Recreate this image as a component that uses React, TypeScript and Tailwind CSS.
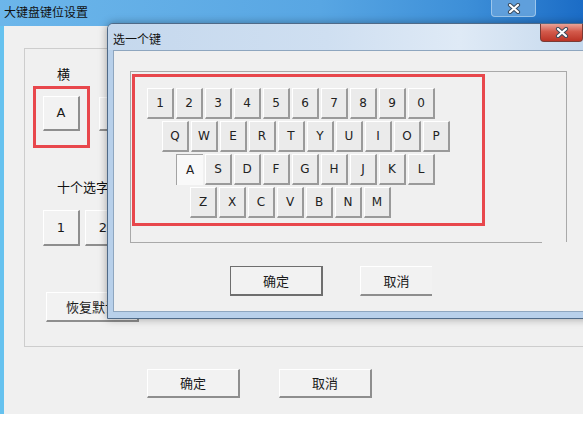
import type { ReactNode } from "react";

const cjk = "font-['Noto_Sans_CJK_SC','Noto_Sans',sans-serif]";
const latin = "font-['DejaVu_Sans','Liberation_Sans',sans-serif]";

const rows: { indent: string; keys: string[] }[] = [
  { indent: "ml-0", keys: ["1", "2", "3", "4", "5", "6", "7", "8", "9", "0"] },
  { indent: "ml-[15px]", keys: ["Q", "W", "E", "R", "T", "Y", "U", "I", "O", "P"] },
  { indent: "ml-[29px]", keys: ["A", "S", "D", "F", "G", "H", "J", "K", "L"] },
  { indent: "ml-[43px]", keys: ["Z", "X", "C", "V", "B", "N", "M"] },
];

function CloseGlyph() {
  return (
    <svg width="14" height="11" viewBox="0 0 14 11">
      <path d="M3 2 L11 9 M11 2 L3 9" stroke="#3a4a5c" strokeWidth="4.2" strokeLinecap="round" />
      <path d="M3 2 L11 9 M11 2 L3 9" stroke="#ffffff" strokeWidth="2.2" strokeLinecap="round" />
    </svg>
  );
}

function WinButton({ children, className = "" }: { children: ReactNode; className?: string }) {
  return (
    <div
      className={`flex items-center justify-center border-t border-l border-r-2 border-b-2 border-t-white border-l-white border-r-[#8e8e8e] border-b-[#8e8e8e] bg-[#f2f2f2] text-[13px] text-[#1a1a1a] ${className}`}
    >
      {children}
    </div>
  );
}

function Key({ label }: { label: string }) {
  const pressed = label === "A";
  return (
    <div
      className={
        pressed
          ? `flex h-[31px] w-[27px] items-center justify-center border-t border-l border-[#a3a3a3] bg-[#f9f9f9] text-[12px] text-[#222] ${latin}`
          : `flex h-[31px] w-[27px] items-center justify-center border-t border-l border-r-2 border-b-2 border-t-white border-l-white border-r-[#9a9a9a] border-b-[#9a9a9a] bg-[#ebebeb] text-[12px] text-[#222] ${latin}`
      }
    >
      {label}
    </div>
  );
}

export default function App() {
  return (
    <div className="relative h-[421px] w-[583px] overflow-hidden bg-white">
      {/* main window */}
      <div className="flex h-[414px] flex-col">
        <div className="flex h-[26px] items-start bg-[linear-gradient(90deg,#6cb6ea_0%,#58a6e3_55%,#3d8fd8_80%,#1b6cc6_100%)]">
          <span className={`mt-[4px] ml-[4px] text-[12px] leading-[16px] text-[#111] ${cjk}`}>大键盘键位设置</span>
          <div className="mr-[47px] ml-auto flex h-[17px] w-[45px] items-center justify-center rounded-b-[4px] border border-t-0 border-[#9cc6ec] bg-[#5f9fdc]">
            <CloseGlyph />
          </div>
        </div>
        <div className="flex flex-1 flex-col border-l-4 border-[#66c2ef] bg-[#f0f0f0] pt-[22px] pl-[20px]">
          <div className="flex h-[299px] w-[600px] flex-col border border-[#cdcdcd]">
            <span className={`mt-[17px] ml-[32px] text-[13px] leading-[16px] text-[#111] ${cjk}`}>横</span>
            <div className="mt-[4px] ml-[8px] flex items-start">
              <div className="h-[62px] w-[57px] border-[3px] border-[#e8474c] pt-[7px] pl-[7px]">
                <WinButton className={`h-[35px] w-[37px] ${latin} text-[12px]`}>A</WinButton>
              </div>
              <WinButton className={`mt-[11px] ml-[9px] h-[34px] w-[37px] ${latin} text-[12px]`}>B</WinButton>
            </div>
            <span className={`mt-[31px] ml-[32px] text-[13px] leading-[16px] text-[#111] ${cjk}`}>十个选字键</span>
            <div className="mt-[15px] ml-[18px] flex gap-[5px]">
              {["1", "2", "3", "4", "5"].map((n) => (
                <WinButton key={n} className={`h-[36px] w-[37px] ${latin} text-[12px]`}>
                  {n}
                </WinButton>
              ))}
            </div>
            <WinButton className={`mt-[46px] ml-[21px] h-[30px] w-[93px] ${cjk}`}>恢复默认</WinButton>
          </div>
          <div className="mt-[22px] ml-[123px] flex gap-[39px]">
            <WinButton className={`h-[29px] w-[93px] ${cjk}`}>确定</WinButton>
            <WinButton className={`h-[29px] w-[93px] ${cjk}`}>取消</WinButton>
          </div>
        </div>
      </div>

      {/* dialog window on top */}
      <div className="absolute top-[23px] left-[107px] flex h-[296px] w-[490px] flex-col rounded-tl-[6px] border border-[#4f6a88] bg-[#b8d0ea] shadow-[0_0_8px_rgba(0,0,0,0.35)]">
        <div className="flex h-[26px] items-start rounded-tl-[5px] bg-[linear-gradient(90deg,#c5d8ed_0%,#cfdff1_45%,#dfeaf6_72%,#c3d7ec_100%)]">
          <span className={`mt-[7px] ml-[5px] text-[12px] leading-[16px] text-[#111] ${cjk}`}>选一个键</span>
          <div className="mr-[13px] ml-auto flex h-[18px] w-[43px] items-center justify-center rounded-b-[4px] border border-t-0 border-[#7a3b36] bg-[linear-gradient(180deg,#e9a296_0%,#d35a4b_45%,#bb3426_100%)]">
            <CloseGlyph />
          </div>
        </div>
        <div className="mb-[6px] ml-[5px] flex flex-1 flex-col border border-[#8ea6bf] bg-[#f0f0f0]">
          <div className="mt-[20px] ml-[16px] h-[171px] w-[437px] border-t border-r border-l border-[#a9a9a9]">
            <div className="mt-[2px] ml-[1px] flex h-[152px] w-[353px] flex-col gap-[2px] border-[3px] border-[#e8474c] pt-[11px] pl-[12px]">
              {rows.map((row) => (
                <div key={row.keys[0]} className={`flex gap-[2px] ${row.indent}`}>
                  {row.keys.map((k) => (
                    <Key key={k} label={k} />
                  ))}
                </div>
              ))}
            </div>
          </div>
          <div className="ml-[16px] h-px w-[412px] bg-[#a9a9a9]" />
          <div className="mt-[23px] ml-[116px] flex gap-[37px]">
            <div
              className={`flex h-[30px] w-[93px] items-center justify-center border border-r-2 border-b-2 border-[#6e6e6e] bg-[#f2f2f2] text-[13px] text-[#1a1a1a] ${cjk}`}
            >
              确定
            </div>
            <div
              className={`flex h-[30px] w-[72px] items-center justify-center border-t border-l border-b-2 border-t-white border-l-white border-b-[#8e8e8e] bg-[#f2f2f2] text-[13px] text-[#1a1a1a] ${cjk}`}
            >
              取消
            </div>
          </div>
        </div>
      </div>
    </div>
  );
}
